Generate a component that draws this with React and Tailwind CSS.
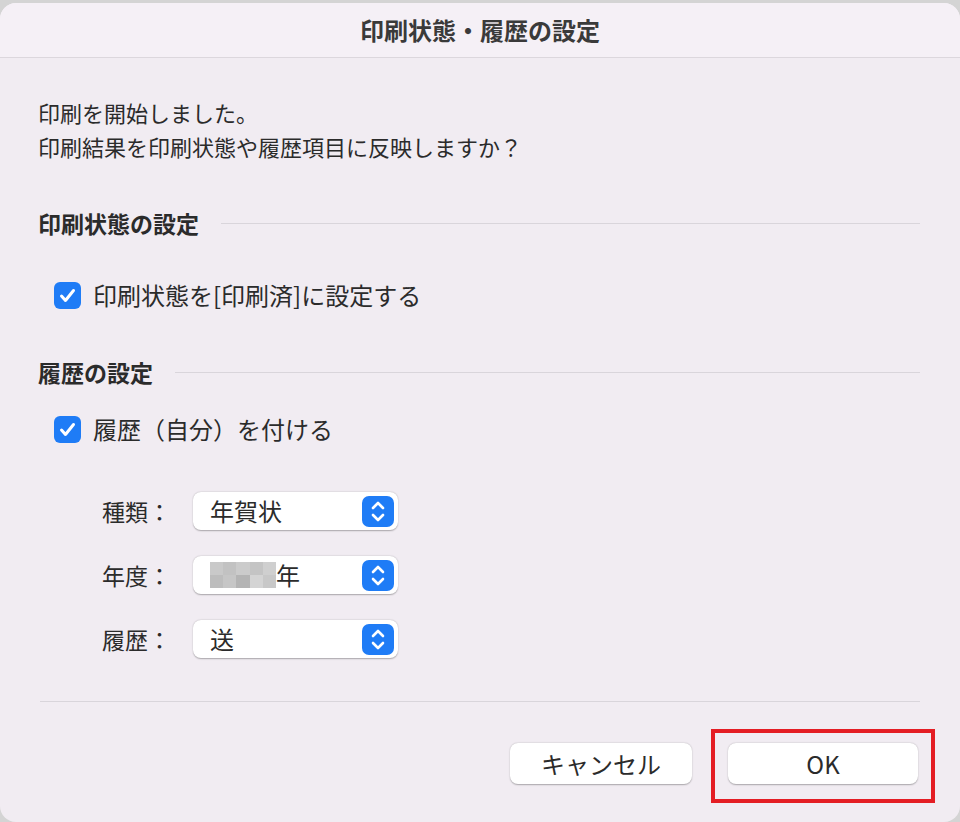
import React from "react";

const font = {
  fontFamily: '"Noto Sans CJK JP", "Noto Sans", sans-serif',
};

const Checkbox = () => (
  <span className="w-[27px] h-[27px] rounded-[6px] bg-[#1f7cf6] flex items-center justify-center shrink-0">
    <svg width="27" height="27" viewBox="0 0 27 27">
      <path
        d="M7.5 14 L11.5 18.5 L19.5 8.5"
        fill="none"
        stroke="white"
        strokeWidth="3"
        strokeLinecap="round"
        strokeLinejoin="round"
      />
    </svg>
  </span>
);

const Stepper = () => (
  <span className="w-[32px] h-[31px] rounded-[7px] bg-[#1f7cf6] flex items-center justify-center shrink-0">
    <svg width="32" height="31" viewBox="0 0 32 31">
      <path
        d="M11 12 L16 7 L21 12 M11 19 L16 24 L21 19"
        fill="none"
        stroke="white"
        strokeWidth="2.6"
        strokeLinecap="round"
        strokeLinejoin="round"
      />
    </svg>
  </span>
);

const Mosaic = () => {
  const cells = [
    "#c9c9c9", "#c2c2c2", "#cbcbcb", "#c4c4c4", "#cfcfcf",
    "#bdbdbd", "#c6c6c6", "#b4b4b4", "#d4d4d4", "#c8c8c8",
  ];
  return (
    <span className="grid grid-cols-5 w-[66px] h-[26px]">
      {cells.map((c, i) => (
        <span key={i} style={{ background: c }} />
      ))}
    </span>
  );
};

const SelectRow = ({ label, children }) => (
  <div className="flex items-center h-[38px] pl-[64px]">
    <span className="w-[91px] text-[23px] text-[#2b2b2b]">{label}</span>
    <div className="w-[205px] h-[38px] bg-white rounded-[8px] shadow-[0_0.5px_1.5px_rgba(0,0,0,0.3)] flex items-center justify-between pl-[17px] pr-[4px]">
      <span className="flex items-center text-[24px] text-[#2b2b2b]">{children}</span>
      <Stepper />
    </div>
  </div>
);

const SectionHeader = ({ title, className }) => (
  <div className={`flex items-center h-[30px] ${className}`}>
    <span className="text-[23px] font-bold text-[#2b2b2b] pr-[22px]">{title}</span>
    <div className="flex-1 h-px bg-[#d9d5db]" />
  </div>
);

export default function App() {
  return (
    <div className="w-[960px] h-[822px] bg-[#d4d4d4] pt-[3px] overflow-hidden" style={font}>
      <div className="h-[819px] bg-[#f1ecf2] rounded-[16px] overflow-hidden">
        <div className="h-[55px] bg-[#f5f0f6] border-b border-[#dcd7dd] flex items-center justify-center">
          <span className="text-[24px] font-bold text-[#3a3a3a]">印刷状態・履歴の設定</span>
        </div>

        <div className="pl-[38px] pr-[40px]">
          <div className="pt-[37px] text-[22px] leading-[34px] text-[#2b2b2b]">
            <p>印刷を開始しました。</p>
            <p>印刷結果を印刷状態や履歴項目に反映しますか？</p>
          </div>

          <SectionHeader title="印刷状態の設定" className="mt-[45px]" />

          <div className="mt-[42px] h-[30px] flex items-center gap-[12px] pl-[16px]">
            <Checkbox />
            <span className="text-[24px] text-[#2b2b2b]">印刷状態を[印刷済]に設定する</span>
          </div>

          <SectionHeader title="履歴の設定" className="mt-[47px]" />

          <div className="mt-[27px] h-[30px] flex items-center gap-[12px] pl-[16px]">
            <Checkbox />
            <span className="text-[24px] text-[#2b2b2b]">履歴（自分）を付ける</span>
          </div>

          <div className="mt-[48px] flex flex-col gap-[26px]">
            <SelectRow label="種類：">年賀状</SelectRow>
            <SelectRow label="年度：">
              <Mosaic />
              年
            </SelectRow>
            <SelectRow label="履歴：">送</SelectRow>
          </div>

          <div className="mt-[43px] ml-[2px] h-px bg-[#d9d5db]" />

          <div className="mt-[41px] flex justify-end gap-[36px] pr-[2px]">
            <button className="w-[182px] h-[41px] bg-white rounded-[8px] shadow-[0_0.5px_1.5px_rgba(0,0,0,0.3)] text-[24px] text-[#2b2b2b]">
              キャンセル
            </button>
            <div className="relative">
              <button className="w-[190px] h-[41px] bg-white rounded-[8px] shadow-[0_0.5px_1.5px_rgba(0,0,0,0.3)] text-[24px] text-[#2b2b2b]">
                OK
              </button>
              <div className="absolute left-[-17px] top-[-14px] w-[224px] h-[74px] border-[4px] border-[#e41d24]" />
            </div>
          </div>
        </div>
      </div>
    </div>
  );
}
